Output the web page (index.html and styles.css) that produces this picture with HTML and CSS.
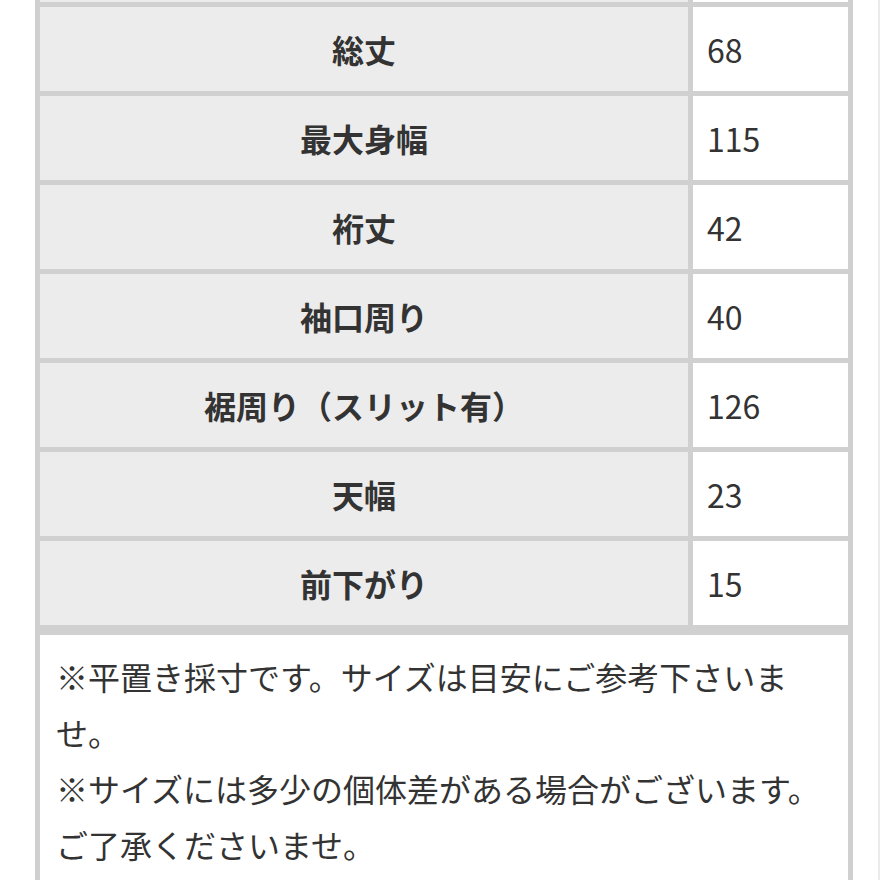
FILE: index.html
```html
<!DOCTYPE html>
<html lang="ja">
<head>
<meta charset="utf-8">
<link rel="stylesheet" href="styles.css">
</head>
<body>
<div class="page">
  <div class="sheet">
    <div class="size-table">
      <div class="label cut"></div><div class="value cut"></div>
      <div class="label">総丈</div><div class="value">68</div>
      <div class="label">最大身幅</div><div class="value">115</div>
      <div class="label">裄丈</div><div class="value">42</div>
      <div class="label">袖口周り</div><div class="value">40</div>
      <div class="label">裾周り（スリット有）</div><div class="value">126</div>
      <div class="label">天幅</div><div class="value">23</div>
      <div class="label">前下がり</div><div class="value">15</div>
    </div>
    <div class="note">
      <p>※平置き採寸です。サイズは目安にご参考下さいませ。</p>
      <p>※サイズには多少の個体差がある場合がございます。ご了承くださいませ。</p>
    </div>
  </div>
</div>
</body>
</html>
```

FILE: styles.css
```css
html, body {
  margin: 0;
  padding: 0;
  background: #ffffff;
}

.page {
  width: 878px;
  height: 880px;
  border-right: 2px solid #ebebeb;
  overflow: hidden;
  font-family: "Noto Sans CJK JP", "Noto Sans", sans-serif;
  color: #333333;
}

.sheet {
  margin-left: 35px;
  width: 818px;
}

.size-table {
  display: grid;
  grid-template-columns: 648px 155px;
  grid-template-rows: 2px repeat(7, 84px);
  gap: 5px;
  padding: 0 5px 5px 5px;
  background: #d0d0d0;
}

.label,
.value {
  display: flex;
  align-items: center;
  font-size: 32px;
  line-height: 1;
}

.label {
  justify-content: center;
  background: #ececec;
  font-weight: 700;
  color: #333333;
}

.value {
  background: #ffffff;
  padding-left: 14px;
  color: #333333;
}

.note {
  border: 5px solid #d0d0d0;
  border-bottom: none;
  background: #ffffff;
  padding: 13px 16px 40px 16px;
  font-size: 32px;
  line-height: 56px;
  color: #333333;
}

.note p {
  margin: 0;
}
```
